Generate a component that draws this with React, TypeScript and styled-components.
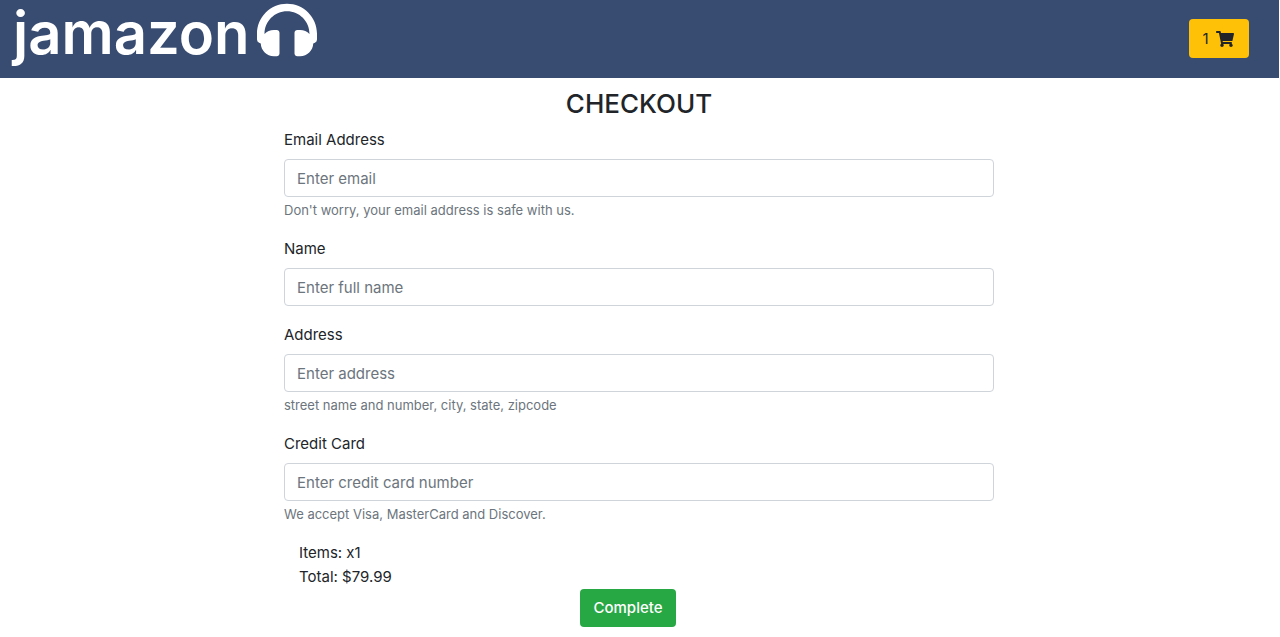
import React from "react";
import styled, { createGlobalStyle } from "styled-components";
import { FaHeadphones, FaShoppingCart } from "react-icons/fa";

const GlobalStyle = createGlobalStyle`
  *, *::before, *::after { box-sizing: border-box; }
  body {
    margin: 0 1px 0 0;
    background: #fff;
    color: #212529;
    font-family: Inter, "Liberation Sans", sans-serif;
    font-size: 15px;
    line-height: 24px;
  }
`;

const Header = styled.header`
  display: flex;
  align-items: flex-start;
  justify-content: space-between;
  height: 78px;
  padding: 0 30px 0 13px;
  background: #384b71;
`;

const Brand = styled.a`
  display: flex;
  align-items: flex-start;
  gap: 7px;
  color: #fff;
  font-size: 58px;
  font-weight: 600;
  line-height: 66px;
  text-decoration: none;
`;

const Button = styled.button<{ $tone: "warning" | "success" }>`
  display: inline-flex;
  align-items: center;
  justify-content: center;
  gap: 7px;
  height: 38px;
  padding: 0 12px;
  border: 0;
  border-radius: 4px;
  background: ${(p) => (p.$tone === "warning" ? "#ffc107" : "#28a745")};
  color: ${(p) => (p.$tone === "warning" ? "#212529" : "#fff")};
  font: inherit;
  font-weight: ${(p) => (p.$tone === "warning" ? 400 : 500)};
  cursor: pointer;
`;

const CartButton = styled(Button)`
  width: 60px;
  height: 39px;
  margin-top: 19px;
  padding: 0 14px 0 12px;
`;

const Main = styled.main`
  max-width: 741px;
  margin: 0 auto;
  padding: 9px 16px 10px 15px;
`;

const Title = styled.h1`
  margin: 0 0 7px;
  font-size: 26px;
  font-weight: 500;
  line-height: 34px;
  text-align: center;
`;

const Field = styled.div`
  display: flex;
  flex-direction: column;
  margin-bottom: 17px;
`;

const Label = styled.label`
  margin-bottom: 7px;
`;

const Input = styled.input`
  width: 100%;
  height: 38px;
  padding: 0 12px;
  border: 1px solid #ced4da;
  border-radius: 4px;
  background: #fff;
  color: #495057;
  font: inherit;
  &::placeholder { color: #6c757d; opacity: 1; }
`;

const Hint = styled.small`
  margin-top: 4px;
  color: #6c757d;
  font-size: 13px;
  line-height: 19px;
`;

const Summary = styled.div`
  padding: 0 15px;
`;

const Line = styled.p`
  margin: 0;
`;

const Actions = styled.div`
  display: flex;
  justify-content: center;
  padding-right: 22px;
`;

const CompleteButton = styled(Button)`
  width: 96px;
`;

const fields = [
  { id: "email", type: "email", label: "Email Address", placeholder: "Enter email", hint: "Don't worry, your email address is safe with us." },
  { id: "name", type: "text", label: "Name", placeholder: "Enter full name" },
  { id: "address", type: "text", label: "Address", placeholder: "Enter address", hint: "street name and number, city, state, zipcode" },
  { id: "card", type: "text", label: "Credit Card", placeholder: "Enter credit card number", hint: "We accept Visa, MasterCard and Discover." },
];

export default function App() {
  return (
    <>
      <GlobalStyle />
      <Header>
        <Brand href="#">
          jamazon
          <FaHeadphones size={60} aria-hidden />
        </Brand>
        <CartButton type="button" $tone="warning" aria-label="Cart, 1 item">
          1 <FaShoppingCart size={18} aria-hidden />
        </CartButton>
      </Header>
      <Main>
        <Title>CHECKOUT</Title>
        <form onSubmit={(e) => e.preventDefault()}>
          {fields.map((f) => (
            <Field key={f.id}>
              <Label htmlFor={f.id}>{f.label}</Label>
              <Input
                id={f.id}
                type={f.type}
                placeholder={f.placeholder}
                aria-describedby={f.hint ? `${f.id}-hint` : undefined}
              />
              {f.hint && <Hint id={`${f.id}-hint`}>{f.hint}</Hint>}
            </Field>
          ))}
          <Summary>
            <Line>Items: x1</Line>
            <Line>Total: $79.99</Line>
          </Summary>
          <Actions>
            <CompleteButton type="submit" $tone="success">Complete</CompleteButton>
          </Actions>
        </form>
      </Main>
    </>
  );
}
